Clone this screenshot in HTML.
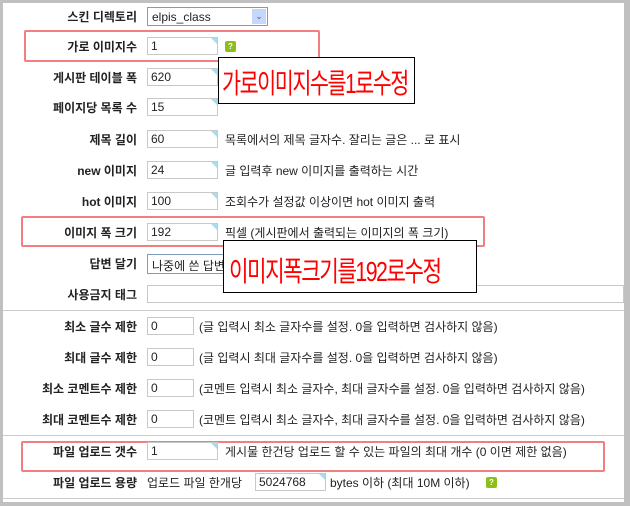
<!DOCTYPE html>
<html><head><meta charset="utf-8"><style>
body{margin:0;width:630px;height:506px;background:#c0c0c0;position:relative;overflow:hidden;font-family:"Liberation Sans","Noto Sans CJK KR","NanumGothic",sans-serif;font-size:12px;color:#222}
#p{position:absolute;left:3px;top:3px;width:621px;height:499px;background:#fff}
.r{position:absolute;left:0;width:621px;height:20px}
.l{position:absolute;right:487px;top:1px;font-weight:bold;white-space:nowrap;text-align:right;color:#222}
.i{position:absolute;left:144px;top:0;width:71px;height:18px;border:1px solid #c8c8c8;box-sizing:border-box;padding:1px 3px;font-size:12px;line-height:15px;background:#fff}
.i::after{content:"";position:absolute;right:0;top:0;border-top:6px solid #a8dcf0;border-left:6px solid transparent}
.s{width:47px}.s::after{display:none}
.t{position:absolute;top:1px;white-space:nowrap}
.q{position:absolute;width:11px;height:11px;background:#8cbf1a;border-radius:2px;color:#fff;font-size:8px;line-height:11px;text-align:center;font-weight:bold}
.hl{position:absolute;border:2px solid #f08080;border-radius:2px}
.box{position:absolute;background:#fff;border:1px solid #000;color:#f00;white-space:nowrap;overflow:hidden;box-sizing:border-box}
.box span{position:absolute;font-size:28px;letter-spacing:-2px;transform-origin:0 50%;line-height:30px}
.sep{position:absolute;left:0;width:621px;height:1px;background:#ccc}
</style></head><body><div id="p">
<div class="r" style="top:4px"><div class="l">스킨 디렉토리</div><div style="position:absolute;left:144px;top:0;width:121px;height:19px;border:1px solid #7f9db9;box-sizing:border-box;padding:2px 4px">elpis_class<div style="position:absolute;right:1px;top:1px;width:14px;height:15px;background:#c6d6fc;color:#4d6185;font-size:9px;text-align:center;line-height:15px">⌄</div></div></div>
<div class="hl" style="left:21px;top:27px;width:292px;height:28px"></div>
<div class="r" style="top:34px"><div class="l">가로 이미지수</div><div class="i">1</div><div class="q" style="left:222px;top:4px">?</div></div>
<div class="r" style="top:65px"><div class="l">게시판 테이블 폭</div><div class="i">620</div></div>
<div class="r" style="top:95px"><div class="l">페이지당 목록 수</div><div class="i">15</div></div>
<div class="r" style="top:127px"><div class="l">제목 길이</div><div class="i">60</div><div class="t" style="left:222px">목록에서의 제목 글자수. 잘리는 글은 ... 로 표시</div></div>
<div class="r" style="top:158px"><div class="l">new 이미지</div><div class="i">24</div><div class="t" style="left:222px">글 입력후 new 이미지를 출력하는 시간</div></div>
<div class="r" style="top:189px"><div class="l">hot 이미지</div><div class="i">100</div><div class="t" style="left:222px">조회수가 설정값 이상이면 hot 이미지 출력</div></div>
<div class="hl" style="left:18px;top:213px;width:460px;height:27px"></div>
<div class="r" style="top:220px"><div class="l">이미지 폭 크기</div><div class="i">192</div><div class="t" style="left:222px">픽셀 (게시판에서 출력되는 이미지의 폭 크기)</div></div>
<div class="r" style="top:251px"><div class="l">답변 달기</div><div style="position:absolute;left:144px;top:0;width:120px;height:20px;border:1px solid #7f9db9;box-sizing:border-box;padding:2px 4px">나중에 쓴 답변</div></div>
<div class="r" style="top:282px"><div class="l">사용금지 태그</div><div style="position:absolute;left:144px;top:0;width:477px;height:18px;border:1px solid #c8c8c8;box-sizing:border-box"></div></div>
<div class="sep" style="top:307px"></div>
<div class="r" style="top:314px"><div class="l">최소 글수 제한</div><div class="i s">0</div><div class="t" style="left:196px">(글 입력시 최소 글자수를 설정. 0을 입력하면 검사하지 않음)</div></div>
<div class="r" style="top:345px"><div class="l">최대 글수 제한</div><div class="i s">0</div><div class="t" style="left:196px">(글 입력시 최대 글자수를 설정. 0을 입력하면 검사하지 않음)</div></div>
<div class="r" style="top:376px"><div class="l">최소 코멘트수 제한</div><div class="i s">0</div><div class="t" style="left:196px">(코멘트 입력시 최소 글자수, 최대 글자수를 설정. 0을 입력하면 검사하지 않음)</div></div>
<div class="r" style="top:407px"><div class="l">최대 코멘트수 제한</div><div class="i s">0</div><div class="t" style="left:196px">(코멘트 입력시 최소 글자수, 최대 글자수를 설정. 0을 입력하면 검사하지 않음)</div></div>
<div class="sep" style="top:432px"></div>
<div class="hl" style="left:18px;top:438px;width:580px;height:27px"></div>
<div class="r" style="top:439px"><div class="l">파일 업로드 갯수</div><div class="i">1</div><div class="t" style="left:222px">게시물 한건당 업로드 할 수 있는 파일의 최대 개수 (0 이면 제한 없음)</div></div>
<div class="r" style="top:470px"><div class="l">파일 업로드 용량</div><div class="t" style="left:144px">업로드 파일 한개당</div><div class="i" style="left:252px">5024768</div><div class="t" style="left:327px">bytes 이하 (최대 10M 이하)</div><div class="q" style="left:483px;top:4px">?</div></div>
<div class="sep" style="top:495px"></div>
<div class="box" style="left:215px;top:54px;width:197px;height:47px"><span style="left:3px;top:11px;transform:scaleX(0.74)">가로이미지수를1로수정</span></div>
<div class="box" style="left:220px;top:237px;width:254px;height:53px"><span style="left:5px;top:16px;transform:scaleX(0.76)">이미지폭크기를192로수정</span></div>
</div></body></html>
